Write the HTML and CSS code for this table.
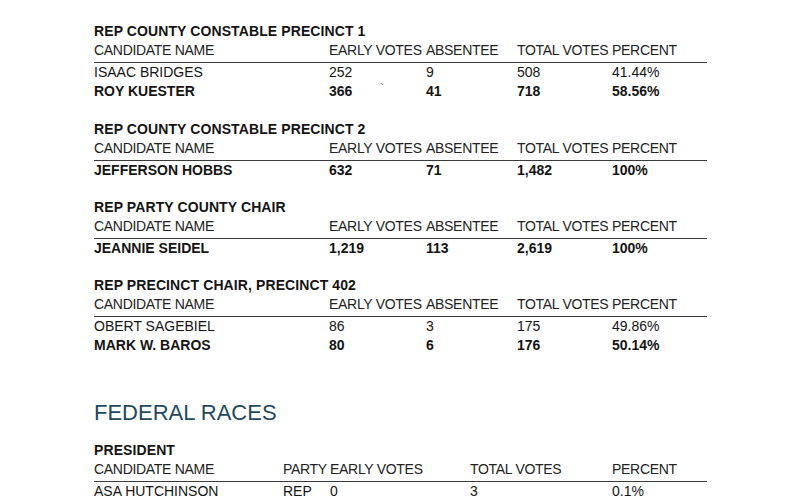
FILE: index.html
```html
<!DOCTYPE html>
<html>
<head>
<meta charset="utf-8">
<link rel="stylesheet" href="styles.css">
</head>
<body>
<div class="page">
  <section class="race">
    <div class="race-title">REP COUNTY CONSTABLE PRECINCT 1</div>
    <div class="tbl local">
      <div class="hdr">CANDIDATE NAME</div><div class="hdr">EARLY VOTES</div><div class="hdr">ABSENTEE</div><div class="hdr">TOTAL VOTES</div><div class="hdr">PERCENT</div>
      <div>ISAAC BRIDGES</div><div>252</div><div>9</div><div>508</div><div>41.44%</div>
      <div class="b">ROY KUESTER</div><div class="b">366<span class="tick">`</span></div><div class="b">41</div><div class="b">718</div><div class="b">58.56%</div>
    </div>
  </section>
  <section class="race">
    <div class="race-title">REP COUNTY CONSTABLE PRECINCT 2</div>
    <div class="tbl local">
      <div class="hdr">CANDIDATE NAME</div><div class="hdr">EARLY VOTES</div><div class="hdr">ABSENTEE</div><div class="hdr">TOTAL VOTES</div><div class="hdr">PERCENT</div>
      <div class="b">JEFFERSON HOBBS</div><div class="b">632</div><div class="b">71</div><div class="b">1,482</div><div class="b">100%</div>
    </div>
  </section>
  <section class="race">
    <div class="race-title">REP PARTY COUNTY CHAIR</div>
    <div class="tbl local">
      <div class="hdr">CANDIDATE NAME</div><div class="hdr">EARLY VOTES</div><div class="hdr">ABSENTEE</div><div class="hdr">TOTAL VOTES</div><div class="hdr">PERCENT</div>
      <div class="b">JEANNIE SEIDEL</div><div class="b">1,219</div><div class="b">113</div><div class="b">2,619</div><div class="b">100%</div>
    </div>
  </section>
  <section class="race">
    <div class="race-title">REP PRECINCT CHAIR, PRECINCT 402</div>
    <div class="tbl local">
      <div class="hdr">CANDIDATE NAME</div><div class="hdr">EARLY VOTES</div><div class="hdr">ABSENTEE</div><div class="hdr">TOTAL VOTES</div><div class="hdr">PERCENT</div>
      <div>OBERT SAGEBIEL</div><div>86</div><div>3</div><div>175</div><div>49.86%</div>
      <div class="b">MARK W. BAROS</div><div class="b">80</div><div class="b">6</div><div class="b">176</div><div class="b">50.14%</div>
    </div>
  </section>
  <h2 class="group">FEDERAL RACES</h2>
  <section class="race">
    <div class="race-title">PRESIDENT</div>
    <div class="tbl federal">
      <div class="hdr">CANDIDATE NAME</div><div class="hdr">PARTY</div><div class="hdr">EARLY VOTES</div><div class="hdr">TOTAL VOTES</div><div class="hdr">PERCENT</div>
      <div>ASA HUTCHINSON</div><div>REP</div><div>0</div><div>3</div><div>0.1%</div>
    </div>
  </section>
</div>
</body>
</html>
```
FILE: styles.css
```css
html, body {
  margin: 0;
  padding: 0;
  background: #ffffff;
}
body {
  font-family: "Liberation Sans", Arial, sans-serif;
  color: #141414;
  font-size: 14px;
}
.page {
  padding: 22px 0 0 94px;
  width: 613px;
}
.race {
  margin-bottom: 18px;
}
.race-title {
  font-weight: bold;
  line-height: 19px;
  letter-spacing: 0.1px;
}
.tbl {
  display: grid;
  line-height: 19px;
}
.tbl.local {
  grid-template-columns: 235px 97px 91px 95px 95px;
}
.tbl.federal {
  grid-template-columns: 189px 47px 140px 142px 95px;
}
.hdr {
  padding-bottom: 2px;
  border-bottom: 1px solid #3a3a3a;
  letter-spacing: -0.3px;
  color: #222;
}
.b {
  font-weight: bold;
}
.tick {
  position: relative;
  top: -4px;
  font-weight: normal;
  font-size: 11px;
  margin-left: 28px;
}
.group {
  margin: 45px 0 15px 0;
  font-size: 22px;
  line-height: 26px;
  font-weight: normal;
  color: #1e4a5e;
}
```
